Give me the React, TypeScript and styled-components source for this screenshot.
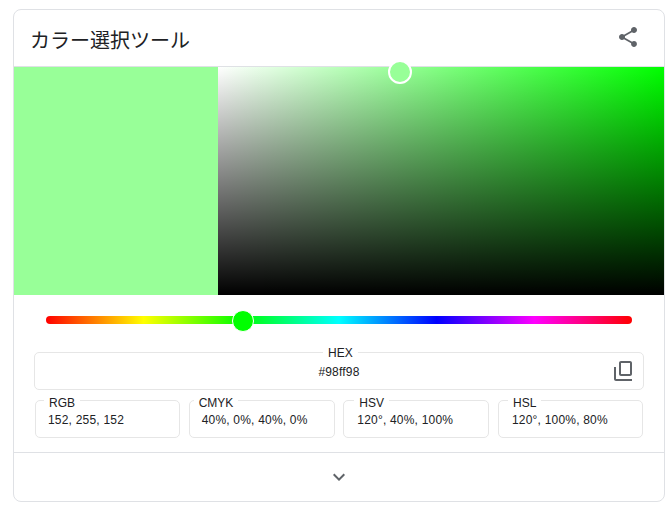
import React from "react";
import styled, { createGlobalStyle } from "styled-components";

const GlobalStyle = createGlobalStyle`
  html, body {
    margin: 0;
    padding: 0;
    background: #fff;
    font-family: "Liberation Sans", Arial, sans-serif;
  }
`;

const Card = styled.div`
  box-sizing: border-box;
  width: 652px;
  height: 493px;
  margin: 9px 0 0 13px;
  border: 1px solid #dfe1e5;
  border-radius: 8px;
  background: #fff;
  display: flex;
  flex-direction: column;
`;

const Header = styled.div`
  height: 57px;
  flex: none;
  display: flex;
  align-items: center;
  justify-content: space-between;
  padding: 3px 24px 0 16px;
  box-sizing: border-box;
  border-bottom: 1px solid #dfe1e5;
`;

const Title = styled.h2`
  margin: 0;
  font-family: "Noto Sans CJK JP", "Liberation Sans", sans-serif;
  font-weight: 400;
  font-size: 20px;
  color: #202124;
`;

const Picker = styled.div`
  flex: none;
  height: 228px;
  display: flex;
`;

const Swatch = styled.div<{ $color: string }>`
  width: 204px;
  background: ${(p) => p.$color};
`;

const Gradient = styled.div`
  flex: 1;
  position: relative;
  background: linear-gradient(to top, #000, transparent),
    linear-gradient(to right, #fff, #0f0);
`;

const PickerThumb = styled.div<{ $color: string }>`
  position: absolute;
  left: 170px;
  top: -7px;
  box-sizing: border-box;
  width: 24px;
  height: 24px;
  border-radius: 50%;
  border: 2px solid #fff;
  background: ${(p) => p.$color};
`;

const SliderRow = styled.div`
  flex: none;
  padding: 21px 32px 0;
`;

const Track = styled.div`
  position: relative;
  height: 8px;
  border-radius: 4px;
  background: linear-gradient(
    to right,
    #f00 0%,
    #ff0 16.67%,
    #0f0 33.33%,
    #0ff 50%,
    #00f 66.67%,
    #f0f 83.33%,
    #f00 100%
  );
`;

const HueThumb = styled.div`
  position: absolute;
  left: 186px;
  top: -6px;
  box-sizing: content-box;
  width: 20px;
  height: 20px;
  border-radius: 50%;
  border: 1px solid #fff;
  background: #0f0;
`;

const Fields = styled.div`
  flex: none;
  padding: 28px 20px 0;
  display: flex;
  flex-direction: column;
  gap: 10px;
`;

const Field = styled.div`
  position: relative;
  box-sizing: border-box;
  height: 38px;
  border: 1px solid #e6e6e6;
  border-radius: 5px;
  font-size: 12px;
  letter-spacing: 0.2px;
  color: #202124;
  display: flex;
  align-items: center;
`;

const HexField = styled(Field)`
  justify-content: center;
  padding-top: 2px;
`;

const Row = styled.div`
  display: grid;
  grid-template-columns: 145px 146px 146px 145px;
  justify-content: space-between;
  padding: 0 1px;
`;

const SmallField = styled(Field)<{ $indent: number }>`
  padding: 1px 0 0 ${(p) => p.$indent}px;
`;

const Legend = styled.span<{ $left: number; $top: number }>`
  position: absolute;
  top: ${(p) => p.$top}px;
  left: ${(p) => p.$left}px;
  padding: 0 5px;
  background: #fff;
  font-size: 12px;
  line-height: 14px;
  letter-spacing: 0;
`;

const CopyButton = styled.svg`
  position: absolute;
  right: 7px;
  top: 7px;
  width: 24px;
  height: 24px;
  fill: #5f6368;
`;

const Footer = styled.div`
  margin-top: 14px;
  border-top: 1px solid #dfe1e5;
  flex-grow: 1;
  display: flex;
  align-items: center;
  justify-content: center;
`;

const Icon = styled.svg`
  width: 24px;
  height: 24px;
  fill: #5f6368;
`;

const ShareIcon = styled(Icon)`
  margin-top: -6px;
`;

const values = [
  { label: "RGB", value: "152, 255, 152", left: 8, indent: 12 },
  { label: "CMYK", value: "40%, 0%, 40%, 0%", left: 4, indent: 12 },
  { label: "HSV", value: "120°, 40%, 100%", left: 10, indent: 13 },
  { label: "HSL", value: "120°, 100%, 80%", left: 9, indent: 13 },
];

export default function App() {
  return (
    <>
      <GlobalStyle />
      <Card>
        <Header>
          <Title>カラー選択ツール</Title>
          <ShareIcon viewBox="0 0 24 24">
            <path d="M18 16.08c-.76 0-1.44.3-1.96.77L8.91 12.7c.05-.23.09-.46.09-.7s-.04-.47-.09-.7l7.05-4.11c.54.5 1.25.81 2.04.81 1.66 0 3-1.34 3-3s-1.34-3-3-3-3 1.34-3 3c0 .24.04.47.09.7L8.04 9.81C7.5 9.31 6.79 9 6 9c-1.66 0-3 1.34-3 3s1.34 3 3 3c.79 0 1.5-.31 2.04-.81l7.12 4.16c-.05.21-.08.43-.08.65 0 1.61 1.31 2.92 2.92 2.92s2.92-1.31 2.92-2.92-1.31-2.92-2.92-2.92z" />
          </ShareIcon>
        </Header>
        <Picker>
          <Swatch $color="#98ff98" />
          <Gradient>
            <PickerThumb $color="#98ff98" />
          </Gradient>
        </Picker>
        <SliderRow>
          <Track>
            <HueThumb />
          </Track>
        </SliderRow>
        <Fields>
          <HexField>
            <Legend $left={288} $top={-7}>
              HEX
            </Legend>
            #98ff98
            <CopyButton viewBox="0 0 24 24">
              <path d="M2 7v12c0 1.1.9 2 2 2h16v-2H4V7H2z" />
              <path d="M18 1H9C7.9 1 7 1.9 7 3v11c0 1.1.9 2 2 2h9c1.1 0 2-.9 2-2V3c0-1.1-.9-2-2-2zm0 13H9V3h9v11z" />
            </CopyButton>
          </HexField>
          <Row>
            {values.map((v) => (
              <SmallField key={v.label} $indent={v.indent}>
                <Legend $left={v.left} $top={-5}>
                  {v.label}
                </Legend>
                {v.value}
              </SmallField>
            ))}
          </Row>
        </Fields>
        <Footer>
          <Icon viewBox="0 0 24 24">
            <path d="M16.59 8.59 12 13.17 7.41 8.59 6 10l6 6 6-6z" />
          </Icon>
        </Footer>
      </Card>
    </>
  );
}
